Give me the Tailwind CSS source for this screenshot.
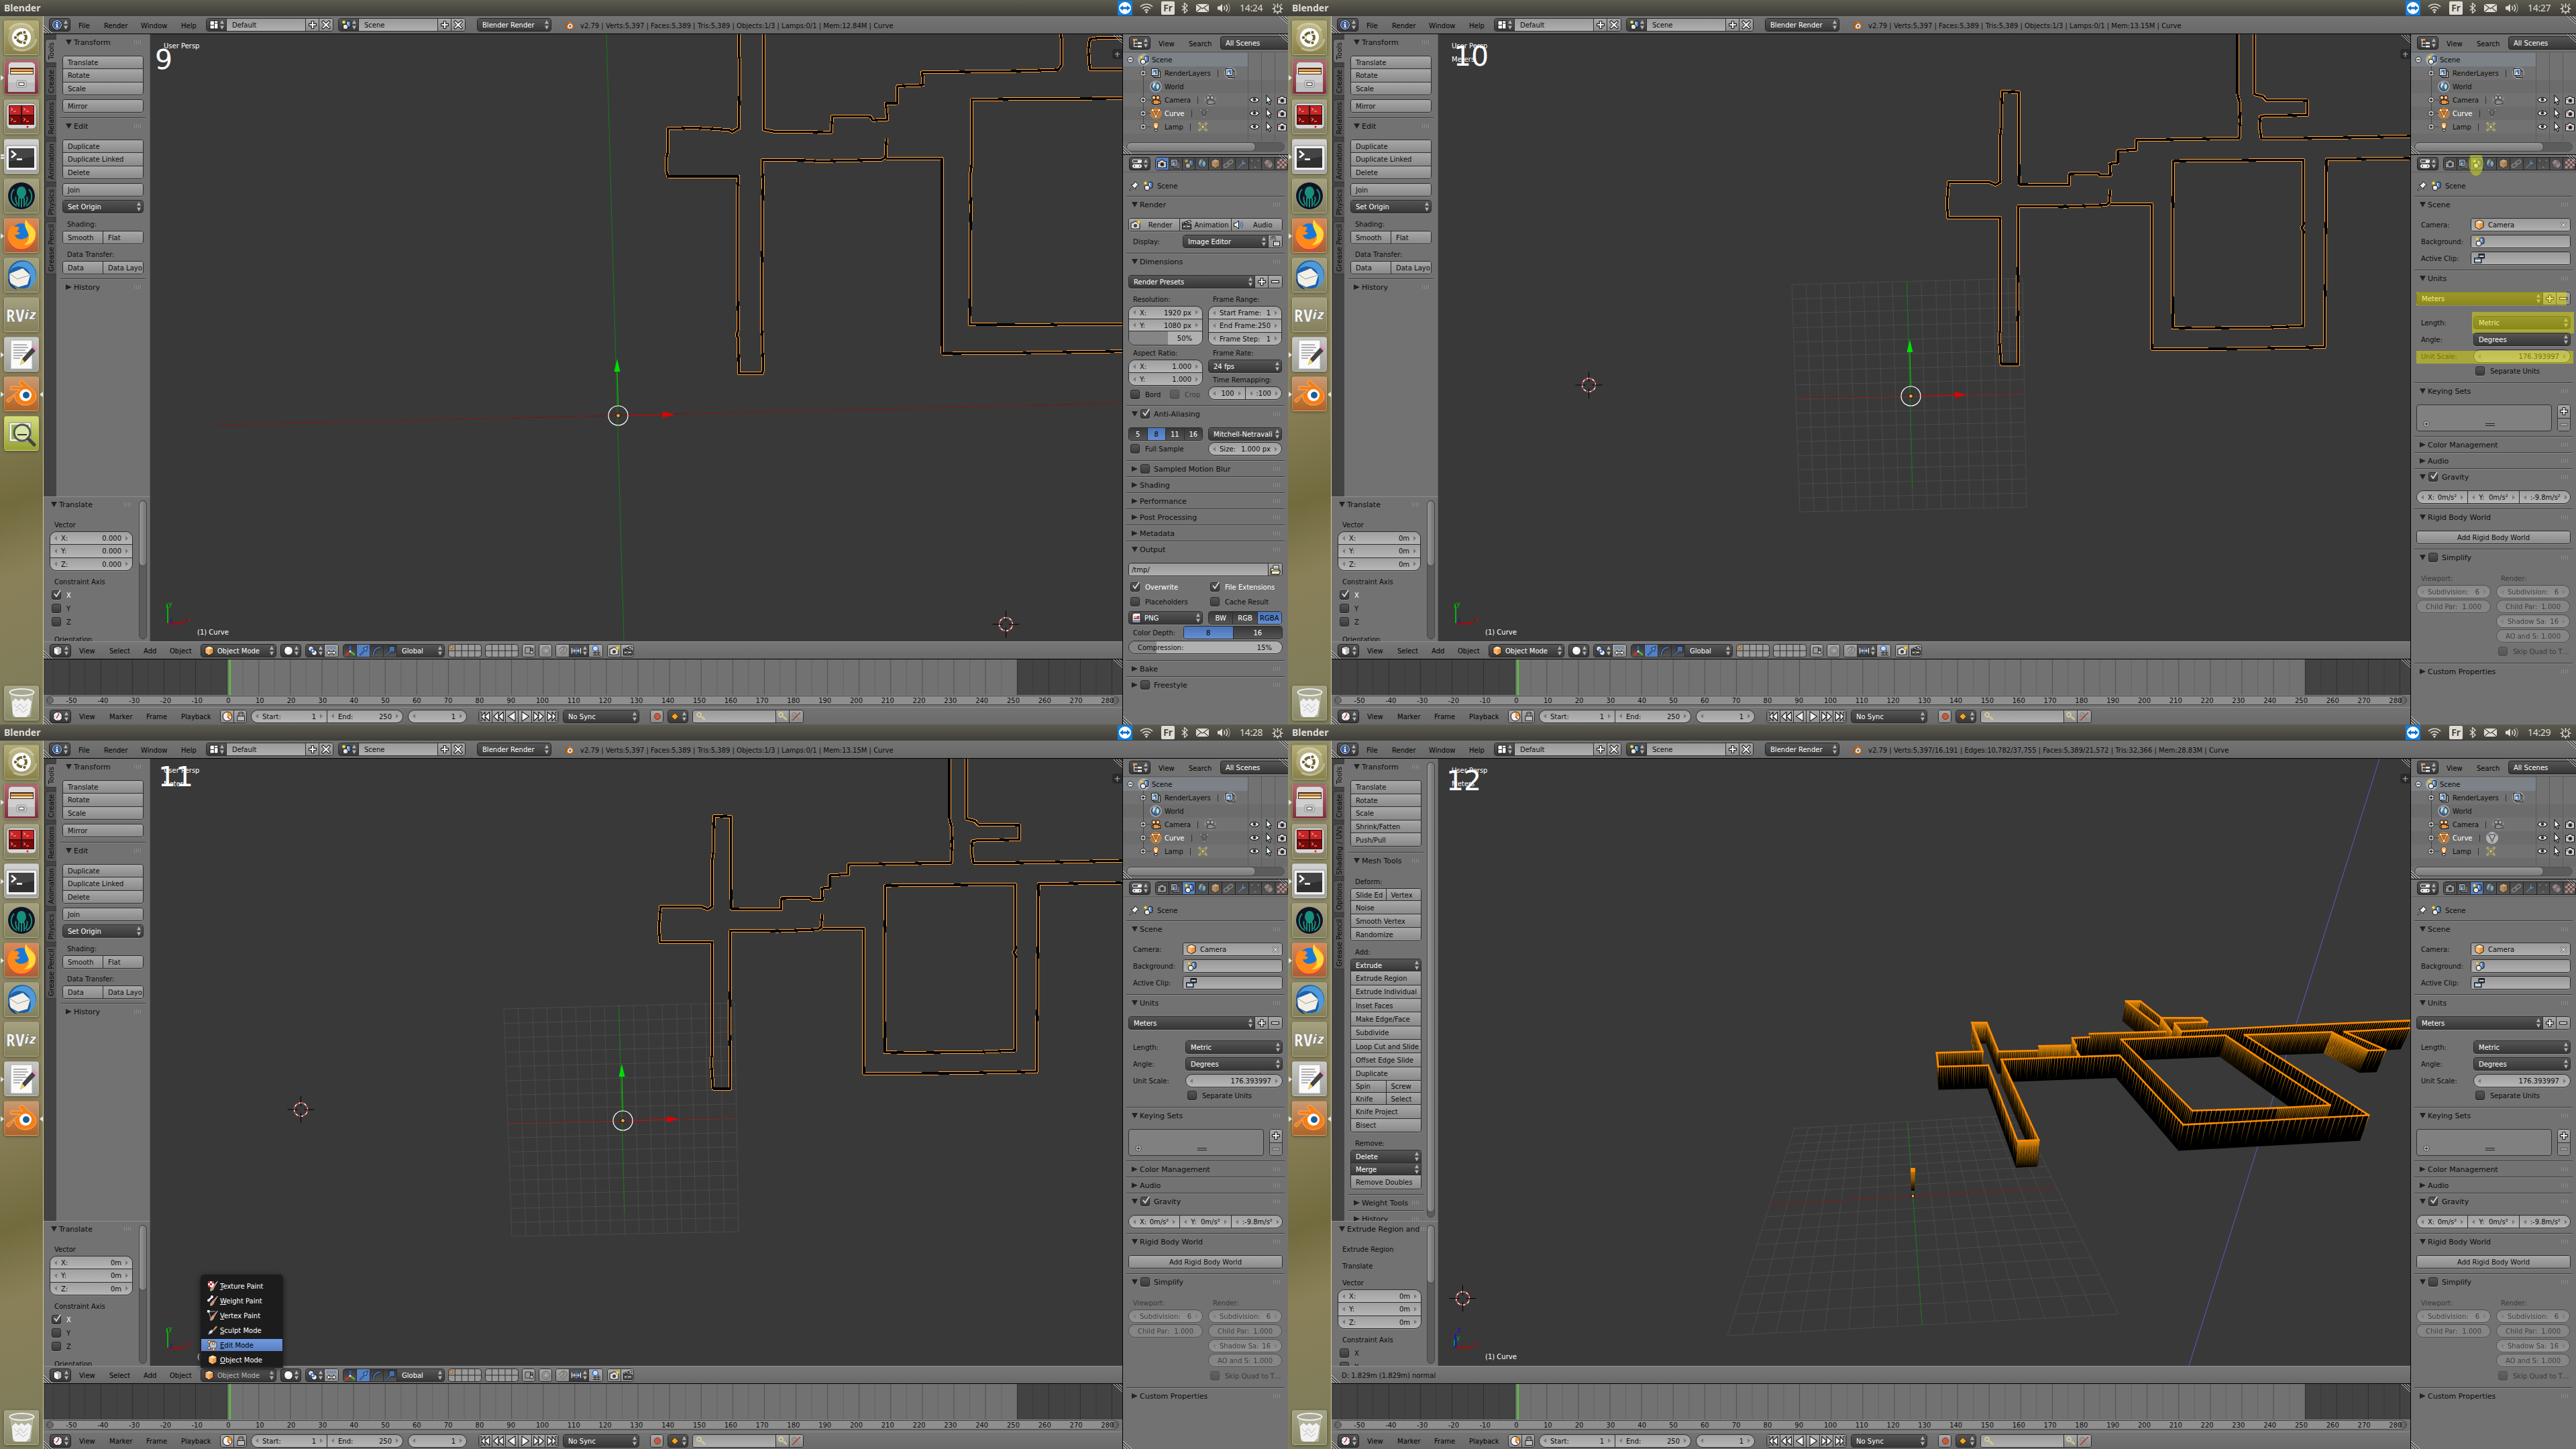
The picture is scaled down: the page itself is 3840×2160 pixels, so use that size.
<!DOCTYPE html>
<html lang="en">
<head>
<meta charset="utf-8">
<title>Blender</title>
<script src="https://cdn.jsdelivr.net/npm/@tailwindcss/browser@4"></script>
</head>
<body class="bg-[#393939]">
<main id="app" class="grid grid-cols-[1920px_1920px] w-[3840px] h-[2160px] overflow-hidden font-['DejaVu_Sans',sans-serif] text-[10px] leading-none text-[#0a0a0a]"></main>
<script>
/* ---------- small icons, drawn on a 16x16 grid ---------- */
const svg = (body, s = 16) => `<svg width="${s}" height="${s}" viewBox="0 0 16 16" class="shrink-0">${body}</svg>`;
const K = 'stroke="#111" stroke-width="1"';
const I = {
  info: svg(`<circle cx="8" cy="8" r="6.600" fill="#3c5f9c" stroke="#e8e8e8"/><circle cx="8" cy="8" r="7.400" fill="none" stroke="#111" stroke-width=".7"/><path d="M7 4h2v2H7zM6.400 7H9v4h1v1H6.400v-1H7.200V8h-.8z" fill="#fff"/>`),
  layout: svg(`<path d="M2 2h12v12H2z" fill="#fff" ${K}/><path d="M8.500 2v12M2 8.500h6M8 5.500h6" stroke="#333" stroke-width="1.200"/>`),
  scene: svg(`<circle cx="4.500" cy="4" r="2" fill="#fff6a0" stroke="#b5a62c" stroke-width="1.300"/><path d="M9 3.500c1-1.600 5-1.600 6 0v7c-1 1.400-5 1.400-6 0z" fill="#4f7fc4" ${K}/><path d="M9.500 3.500h2v7h-2z" fill="#cfe0f7"/><circle cx="7" cy="11" r="3.900" fill="#ddd" ${K}/><circle cx="6" cy="10" r="1.600" fill="#fff"/>`),
  tree: svg(`<path d="M2 2h6v2.500H2z" fill="#f0a04a"/><path d="M3.500 4v9.500h5M3.500 8.500h5" stroke="#eee" fill="none"/><path d="M9 7h6v2.500H9zM9 12h6v2.500H9z" fill="#eee"/>`),
  props: svg(`<rect x="1.500" y="2" width="13" height="4.600" rx="1" fill="#555" stroke="#eee"/><path d="M9 3h5v3H9z" fill="#eee"/><rect x="1.500" y="9.400" width="13" height="4.600" rx="2.200" fill="#eee" stroke="#eee"/><path d="M3 11.700l2-1.400v2.800zM13 11.700l-2-1.400v2.800z" fill="#333"/>`),
  cube: svg(`<path d="M8 1l6 2.500v8L8 15l-6-3.500v-8z" fill="#e89a45" ${K}/><path d="M2.500 4L8 6.300 13.500 4 8 1.600z" fill="#ffe2bb"/><path d="M8 6.300V14.400L2.500 11.200V4z" fill="#f7b873"/>`),
  cubeW: svg(`<path d="M8 1l6 2.500v7c0 2-4 3.500-6 4.500-2-1-6-2.500-6-4.500v-7z" fill="#bbb" ${K}/><path d="M3 4l5 2v8c-2-1-5-2-5-4z" fill="#fff"/>`),
  sphere: svg(`<circle cx="8" cy="8" r="6.500" fill="#eee" ${K}/><circle cx="6.500" cy="6" r="3.500" fill="#fff"/>`),
  pivot: svg(`<circle cx="5.500" cy="5" r="4" fill="#ddd" ${K}/><circle cx="10.500" cy="11" r="4" fill="#eee" ${K}/><rect x="6" y="6" width="4" height="4" fill="#fff" stroke="#2f67c9" stroke-width="1.600"/>`),
  manip: svg(`<circle cx="3" cy="3" r="1.500" fill="#a8c8f5" stroke="#28508f" stroke-width=".8"/><circle cx="8" cy="3" r="1.500" fill="#a8c8f5" stroke="#28508f" stroke-width=".8"/><circle cx="13" cy="3" r="1.500" fill="#a8c8f5" stroke="#28508f" stroke-width=".8"/><path d="M1 11l4-3.500v2.300h6V7.500l4 3.500-4 3.500v-2.300H5v2.300z" fill="#fff" ${K}/>`),
  axes: svg(`<path d="M8 9V2" stroke="#2860d0" stroke-width="2.600" stroke-linecap="round"/><path d="M8 9l-6 5" stroke="#e03020" stroke-width="2.600" stroke-linecap="round"/><path d="M8 9l6 4.500" stroke="#58b82c" stroke-width="2.600" stroke-linecap="round"/><circle cx="8" cy="9" r="1.300" fill="#fff"/>`),
  move: svg(`<path d="M2 14L9.500 6.500 7 4.500 14.500 1.500 12 9l-1.500-1.500L3.500 15z" fill="#5f95e0" stroke="#10264e" stroke-width=".9"/>`),
  rot: svg(`<path d="M3 14C3 7 7 3.500 13 3" stroke="#1c2a40" stroke-width="4" fill="none"/><path d="M3 14C3 7 7 3.500 13 3" stroke="#4c6f9f" stroke-width="2.200" fill="none"/>`),
  scale: svg(`<path d="M2.500 14L8 8.500M7 2.500h6.500V9H7z" stroke="#1c2a40" stroke-width="3.500" fill="#4c6f9f"/><path d="M2.500 14L8 8.500M7.500 3h5.500v5.500H7.500z" stroke="#4c6f9f" stroke-width="1.800" fill="#4c6f9f"/>`),
  lockv: svg(`<path d="M2 3h8v9H2z" fill="#999" stroke="#333"/><circle cx="11.500" cy="6" r="2" fill="none" stroke="#222" stroke-width="1.200"/><rect x="9" y="8" width="5" height="5" rx="2" fill="#bbb" stroke="#222"/>`),
  ring: svg(`<circle cx="8" cy="8" r="6" fill="none" stroke="#777" stroke-width="1.400"/><circle cx="8" cy="8" r="3.300" fill="#aaa" stroke="#777"/>`),
  magnet: svg(`<path d="M4 12L9 7c2.500-2.500-1-6-3.500-3.500L2 7M7 14.500l5.500-5C17 5 11 0 6.500 3" fill="none" stroke="#777" stroke-width="1.600"/>`),
  snapinc: svg(`<path d="M1.500 4v8M14.500 4v8M5 5.500v5M11 5.500v5" stroke="#eee" stroke-width="1.200"/><path d="M8 3v10" stroke="#3b76d8" stroke-width="2.400"/><path d="M1.500 8h13" stroke="#eee" stroke-width=".8"/>`),
  snapgrid: svg(`<path d="M7 8v7M12 7v8M4 11h11M4 14.500h11" stroke="#222"/><circle cx="7.500" cy="4.500" r="4" fill="#c7dcfa" stroke="#2b5fb0" stroke-width="1.300"/>`),
  cam: svg(`<path d="M1.500 4.500H5l1-2h4l1 2h3.500V14H1.500z" fill="#ccc" ${K}/><circle cx="8.500" cy="9" r="3.800" fill="#444" stroke="#eee" stroke-width="1.200"/><circle cx="8.500" cy="9" r="1.500" fill="#111"/><path d="M2.500 6.500h2v1.500h-2z" fill="#c22"/>`),
  camstar: svg(`<path d="M1 5H4.500l1-2h4l1 2H14V14H1z" fill="#ccc" ${K}/><circle cx="7.500" cy="9.500" r="3.400" fill="#444" stroke="#eee" stroke-width="1.200"/><path d="M12.500 0l1 2.500L16 3l-2 1.500.3 2.500-1.800-1.200L10.800 7l.2-2.500L9 3l2.500-.5z" fill="#ffd84a" stroke="#9a7a10" stroke-width=".5"/>`),
  clap: svg(`<path d="M1.500 7h13v7.500h-13z" fill="#555" stroke="#111"/><path d="M1 5.500L13.500 1l1 2.400L2 7z" fill="#eee" ${K}/><path d="M4 4.500l2 1.800M8 3l2 1.600" stroke="#111" stroke-width="1.400"/><path d="M3 10.500h3M8 10.500h5" stroke="#eee"/>`),
  spk: svg(`<path d="M1.500 5.500h3L8.500 2v12l-4-3.500h-3z" fill="#e8e8e8" ${K}/><path d="M10.500 5c1.500 2 1.500 4 0 6M12.700 3c2.500 3 2.500 7 0 10" fill="none" stroke="#3c6fc0" stroke-width="1.300"/>`),
  unlock: svg(`<path d="M2 6V4c0-3.500 5.500-3.500 5.500 0v4" fill="none" stroke="#111" stroke-width="2.600"/><path d="M2 6V4c0-3.500 5.500-3.500 5.500 0v4" fill="none" stroke="#eee" stroke-width="1"/><rect x="5.500" y="8" width="9" height="6.500" fill="#eee" ${K}/><path d="M7 10h6M7 12h6" stroke="#999"/>`),
  lock: svg(`<path d="M5 8V5c0-4 6.500-4 6.500 0v3" fill="none" stroke="#222" stroke-width="2.600"/><path d="M5 8V5c0-4 6.500-4 6.500 0v3" fill="none" stroke="#bbb" stroke-width="1"/><rect x="3" y="7.500" width="10.500" height="7" fill="#bbb" stroke="#222"/>`),
  clock: svg(`<circle cx="8" cy="8" r="6.800" fill="#eee" ${K}/><path d="M8 8L10 3.500M8 8L5.500 10.500" stroke="#c01818" stroke-width="1.400"/><path d="M8 2v1.500M8 12.500V14M2 8h1.500M12.500 8H14" stroke="#555"/>`),
  clockO: svg(`<circle cx="8" cy="8" r="6.800" fill="#eee" ${K}/><path d="M8 8V1.800A6.200 6.200 0 0 1 14.200 8z" fill="#f59a1c"/><path d="M8 8l3.500 4" stroke="#c01818" stroke-width="1.400"/>`),
  layers: svg(`<path d="M5 5h9.500v9.500H5z" fill="#eee" ${K}/><path d="M3.500 3.500h9V13h-9z" fill="#eee" ${K}/><path d="M1.500 1.500h9.500v10H1.500z" fill="#fff" ${K}/><path d="M3 3h6.500v7H3z" fill="#3f70b5"/><circle cx="5.500" cy="8" r="1.600" fill="#fff"/><circle cx="4.500" cy="4.500" r="1" fill="#ffe36b"/>`),
  world: svg(`<circle cx="8" cy="8" r="6.300" fill="#3a6fae" stroke="#1a2a44"/><path d="M3.500 5C5 2.500 8 3 7.500 5S5 7 5.500 9 4 9.500 3 8.500zM10 3.500l3 2.500-.5 4-2 2.500-1.500-3L8.500 8z" fill="#cde0b8"/><path d="M4 3.500A6 6 0 0 1 9 2.200" stroke="#fff" fill="none"/>`),
  film: svg(`<circle cx="5" cy="4.500" r="3" fill="#f0a35a" ${K}/><circle cx="11" cy="4.500" r="3" fill="#f0a35a" ${K}/><circle cx="5" cy="4.500" r="1" fill="#fff"/><circle cx="11" cy="4.500" r="1" fill="#fff"/><path d="M4 8h8v2l3-1v5l-3-1v1.500H4z" fill="#ee9440" ${K}/><path d="M2 9l2 2v2H2z" fill="#eee" ${K}/>`),
  tri: svg(`<path d="M3 3h10L8 13z" fill="none" stroke="#8c4a08" stroke-width="3.400"/><path d="M3 3h10L8 13z" fill="none" stroke="#ffb865" stroke-width="1.500"/><circle cx="3" cy="3" r="1.300" fill="#fff"/><circle cx="13" cy="3" r="1.300" fill="#fff"/><circle cx="8" cy="13" r="1.300" fill="#fff"/>`),
  triG: svg(`<path d="M3 3h10L8 13z" fill="none" stroke="#444" stroke-width="1.200"/><path d="M2 2h2.500v2.500H2zM11.500 2H14v2.500h-2.500zM6.800 12h2.500v2.500H6.800z" fill="#bbb" stroke="#444" stroke-width=".6"/>`),
  bulb: svg(`<path d="M4 5.500C4 0 12 0 12 5.500 12 8 10 8.500 10 11H6C6 8.500 4 8 4 5.500z" fill="#f5b36a" stroke="#7a400a"/><path d="M6 11.500h4v2L8 15l-2-1.500z" fill="#ddd" ${K}/><path d="M7 5l1 5 1-5" stroke="#fff" fill="none"/>`),
  lampd: svg(`<rect x="3" y="3" width="10" height="10" fill="#8f8b62"/><circle cx="8" cy="8" r="2.400" fill="#d8d28a" stroke="#555"/><path d="M2 5V2h3M11 2h3v3M14 11v3h-3M5 14H2v-3M2 2l3.500 3.500M14 2l-3.500 3.500M2 14l3.500-3.500M14 14l-3.500-3.500" stroke="#bdb878" fill="none"/>`),
  eye: svg(`<path d="M1 8C4 3 12 3 15 8 12 12.500 4 12.500 1 8z" fill="#fff" stroke="#111" stroke-width="1.200"/><circle cx="8" cy="7.500" r="2.800" fill="#555"/><circle cx="8" cy="7.500" r="1.300" fill="#111"/>`),
  cursor: svg(`<path d="M5 1l7.500 8.500-3.500.3 2 4.200-1.800 1-2-4.300L5 13z" fill="#fff" stroke="#111" stroke-width="1.100"/>`),
  chain: svg(`<rect x="1" y="8" width="8" height="4.500" rx="2.200" transform="rotate(-35 5 10)" fill="none" stroke="#aaa" stroke-width="1.500"/><rect x="7" y="3.500" width="8" height="4.500" rx="2.200" transform="rotate(-35 11 6)" fill="none" stroke="#aaa" stroke-width="1.500"/>`),
  wrench: svg(`<path d="M2 13.500L8 7.500C7 4 10 1 13 2l-2.500 2.500 1 1.500L14.500 5C15 8 12 10 9.500 9.200l-6 6z" fill="#8aa8cc" stroke="#22324a"/>`),
  mat: svg(`<circle cx="8" cy="8" r="6.300" fill="#8b8080" stroke="#222"/><path d="M8 8V1.700A6.300 6.300 0 0 0 1.700 8zM8 8v6.300A6.300 6.300 0 0 0 14.300 8z" fill="#c9a9a9"/>`),
  tex: svg(`<path d="M1 1h14v14H1z" fill="#ccc"/><path d="M1 1h3.500v3.500H1zM8 1h3.500v3.500H8zM4.500 4.500H8V8H4.500zM11.500 4.500H15V8h-3.500zM1 8h3.500v3.500H1zM8 8h3.500v3.500H8zM4.500 11.500H8V15H4.500zM11.500 11.500H15V15h-3.500z" fill="#8f3a34"/>`),
  pin: svg(`<path d="M9 1.500l5.500 5.500-2 .5L10 10l-.5 3L3 6.500 6 6l2.500-2.500z" fill="#eee" ${K}/><path d="M5.500 10.500L1 15" stroke="#111" stroke-width="2.200"/><path d="M5.500 10.500L1.500 14.500" stroke="#eee" stroke-width="1"/>`),
  clip: svg(`<path d="M7 1.500h8.500V8H7z" fill="#333" stroke="#111"/><path d="M8 4h6.500v2H8z" fill="#bcd3ee"/><path d="M.5 7.500H11V15H.5z" fill="#2c4468" stroke="#111"/><path d="M1.500 10H10v2.800H1.500z" fill="#dfeaf7"/><path d="M1.500 8.700H10M1.500 14H10" stroke="#fff" stroke-dasharray="1.200 1"/>`),
  png: svg(`<path d="M4.500 1H14v14H2V3.500z" fill="#fff" ${K}/><path d="M4 5h8.500v5H4z" fill="#a8505a"/><path d="M4 5h5v3H4z" fill="#e8b0a0"/><path d="M3 11h10v3H3z" fill="#8f8fc4"/>`),
  folder: svg(`<path d="M5 1.500h8V10H5z" fill="#fff" ${K}/><path d="M6.500 4h5M6.500 6h5" stroke="#666"/><path d="M1.500 6h3l1 1.500H14V15H1.500z" fill="#e8dfa8" ${K}/><path d="M3 10h12.500L14 15H1.500z" fill="#f7f1c8" ${K}/>`),
  plus: svg(`<path d="M6.300 2.500h3.400v3.800h3.800v3.400H9.700v3.800H6.300V9.700H2.500V6.300h3.800z" fill="#f2f2f2" stroke="#222" stroke-width="1.200"/>`),
  minus: svg(`<path d="M2.500 6.300h11v3.400h-11z" fill="#f2f2f2" stroke="#222" stroke-width="1.200"/>`),
  x: svg(`<path d="M3.500 1.500L8 5.500l4.500-4 2 2-4 4.500 4 4.500-2 2-4.500-4-4.500 4-2-2 4-4.500-4-4.500z" fill="#eee" stroke="#222" stroke-width="1.100"/>`),
  logo: svg(`<path d="M1 12.500L7.500 7H2.500V5.500H9L7 3.500 8.200 2.200l5.500 4.600c2.800 2.800 1.300 8-4.200 8-3.800 0-5.300-2.800-4.900-4.800L2 13.500z" fill="#f09030" stroke="#7a3a05" stroke-width=".6"/><circle cx="9.600" cy="10" r="3" fill="#fff"/><circle cx="9.800" cy="10" r="1.700" fill="#27619e"/>`),
  brush: (l) => svg(`${l}<path d="M15.500 1L8 8.500l1.800 1.800z" fill="#f0502c" stroke="#fff" stroke-width=".6"/><path d="M8 8.500L4.500 12.500 5 15.500C8 15 9.500 13 9.800 10.300z" fill="#c9906c" stroke="#fff" stroke-width=".5"/>`),
  chisel: svg(`<path d="M1.500 14.500L3 9.500l4-2.500 2 2-2.500 3.500z" fill="#cfe0f2" stroke="#555" stroke-width=".6"/><path d="M8 8l5-6.500 2 1.500-5.500 6z" fill="#e0a878" stroke="#7a4a22" stroke-width=".7"/>`),
  edit: svg(`<path d="M3.500 4L8 2l6 2v7l-4 3-6.500-2z" fill="#b9c4d6" stroke="#444"/><path d="M1 1.500h3.500V5H1zM7.500 3.500H11V7H7.500zM1 10.500h3.500V14H1zM7.500 12.500H11V16H7.500z" fill="#ffe0bb" stroke="#8a4a0c"/>`),
  rec: svg(`<circle cx="8" cy="8" r="4.500" fill="#c75a3c" stroke="#8c2a18"/>`),
  keyset: svg(`<path d="M8 3l5 5-5 5-5-5z" fill="#f5a623" stroke="#6b3b00"/>`),
  key: svg(`<circle cx="5" cy="5.500" r="3" fill="none" stroke="#d8cf92" stroke-width="1.800"/><path d="M7 7.500l6.500 6M10 10.500l2-2M12 12.500l2-1.500" stroke="#d8cf92" stroke-width="1.600"/>`),
  keyx: svg(`<circle cx="5" cy="5.500" r="3" fill="none" stroke="#8d8a78" stroke-width="1.800"/><path d="M7 7.500l6.500 6" stroke="#8d8a78" stroke-width="1.600"/><path d="M2 14L14 2" stroke="#a33" stroke-width="1.400"/>`)
};
const play = (p) => svg(`<path d="${p}" fill="#f2f2f2" stroke="#222" stroke-width="1.100" stroke-linejoin="round"/>`, 18);
const PL = [
  play('M1.500 2h2v5.500L8 2v5.500L14 2v12L8 8.500V14L3.500 8.500V14h-2z'),
  play('M1.500 8L8 2v12zM8 8l6.500-6v12z'),
  play('M3 8l9.500-6.500v13z'),
  play('M13 8L3.500 1.500v13z'),
  play('M14.500 8L8 2v12zM8 8L1.500 2v12z'),
  play('M14.500 2h-2v5.500L8 2v5.500L2 2v12l6-5.500V14l4.500-5.500V14h2z')
];

/* ---------- widgets ---------- */
const ud = `<svg width="6" height="14" viewBox="0 0 6 14" class="shrink-0"><path d="M3 0l3 5.500H0zM3 14l3-5.500H0z" fill="#b4b4b4"/></svg>`;
const arL = (o) => `<svg width="4" height="7" viewBox="0 0 4 7" class="shrink-0"><path d="M4 0v7L0 3.500z" fill="#666" opacity="${o}"/></svg>`;
const arR = (o) => `<svg width="4" height="7" viewBox="0 0 4 7" class="shrink-0"><path d="M0 0v7l4-3.500z" fill="#666" opacity="${o}"/></svg>`;
const btn = (t) => `<div class="flex-1 basis-0 min-w-0 flex items-center pt-[2px] pl-[7px] overflow-hidden whitespace-nowrap bg-linear-to-b from-[#a8a8a8] to-[#8a8a8a]">${t}</div>`;
const btnC = (t) => `<div class="flex-1 min-w-0 flex items-center justify-center overflow-hidden whitespace-nowrap bg-linear-to-b from-[#a8a8a8] to-[#8a8a8a]">${t}</div>`;
const btnI = (icon, t) => `<div class="flex-1 basis-0 min-w-0 flex items-center pl-[2px] overflow-hidden whitespace-nowrap bg-linear-to-b from-[#a8a8a8] to-[#8a8a8a]">${icon}<span class="flex-1 text-center pt-[2px]">${t}</span></div>`;
const sq = (icon) => `<div class="w-[20px] shrink-0 flex items-center justify-center bg-linear-to-b from-[#a8a8a8] to-[#8a8a8a]">${icon}</div>`;
const menu = (t, pad = 'pl-[7px]', icon = '') => `<div class="flex-1 min-w-0 flex items-center justify-between ${pad} pr-[3px] text-white whitespace-nowrap bg-linear-to-b from-[#555] to-[#373737]"><div class="flex items-center gap-1">${icon}<span class="pt-[2px]">${t}</span></div>${ud}</div>`;
const radio = (t, on) => `<div class="flex-1 flex items-center justify-center pt-[2px] ${on ? 'bg-linear-to-b from-[#4a74b6] to-[#658fd1] text-black' : 'bg-linear-to-b from-[#373737] to-[#555] text-white'}">${t}</div>`;
const num = (l, v, o = 1) => `<div class="flex-1 min-w-0 flex items-center gap-1.5 px-[6px] whitespace-nowrap bg-linear-to-b from-[#a0a0a0] to-[#b6b6b6]">${arL(.75 * o)}<span class="flex-1 flex justify-between pt-[2px]"><span>${l}</span><span>${v}</span></span>${arR(.75 * o)}</div>`;
const col = (n, rows) => `<div class="flex flex-col shrink-0 divide-y divide-[#2c2c2c] rounded-[4px] border border-[#2c2c2c] overflow-hidden shadow-[0_1px_0_#8b8b8b]" style="height:${n * 20 - (n > 1 ? 1 : 0)}px">${rows.join('')}</div>`;
const pill = (n, rows, dim) => `<div class="flex flex-col shrink-0 divide-y divide-[#2c2c2c] rounded-[10px] border border-[#2c2c2c] overflow-hidden shadow-[0_1px_0_#8b8b8b] ${dim ? 'opacity-50' : ''}" style="height:${n * 20 - (n > 1 ? 1 : 0)}px">${rows.join('')}</div>`;
const split = (a) => `<div class="flex flex-1 divide-x divide-[#2c2c2c]">${a.join('')}</div>`;
const check = (on, dim) => `<span class="relative size-[14px] shrink-0 rounded-[3px] border border-[#2a2a2a] bg-linear-to-b from-[#555] to-[#3a3a3a] shadow-[0_1px_0_#8b8b8b] ${dim ? 'opacity-50' : ''}">${on ? '<svg width="13" height="13" viewBox="0 0 13 13" class="absolute left-0 -top-0.5"><path d="M3 6l3 4 6-9" fill="none" stroke="#ddd" stroke-width="1.800"/></svg>' : ''}</span>`;
const opt = (t, on, dim) => `<label class="flex items-center gap-2 h-[20px] pl-[3px] whitespace-nowrap ${on ? 'text-white' : ''} ${dim ? 'text-[#3c3c3c]' : ''}">${check(on, dim)}<span class="pt-[2px]">${t}</span></label>`;
const lab = (t, dim) => `<div class="h-[20px] flex items-center pt-[2px] pl-[7px] whitespace-nowrap ${dim ? 'text-[#3c3c3c]' : ''}">${t}</div>`;
const sp = (h) => `<div class="shrink-0" style="height:${h}px"></div>`;
const grip = `<svg width="11" height="6" viewBox="0 0 11 6" class="shrink-0"><path d="M0 1h11M0 3h11M0 5h11" stroke="#a5a5a5" stroke-dasharray="1 2"/></svg>`;
const triD = `<svg width="9" height="8" viewBox="0 0 9 8" class="shrink-0"><path d="M0 0h9L4.500 8z" fill="#222"/></svg>`;
const triR = `<svg width="9" height="8" viewBox="0 0 9 8" class="shrink-0"><path d="M0 0v8l9-4z" fill="#222"/></svg>`;
const title = (t, open, chk) => `<div class="h-[22px] shrink-0 flex items-center text-[11px] whitespace-nowrap pl-[8px] pr-[6px]">${open ? triD : triR}${chk === undefined ? '' : `<span class="ml-[4px] flex">${check(chk)}</span>`}<span class="${chk === undefined ? 'ml-[3px]' : 'ml-[6px]'} flex-1">${t}</span>${grip}</div>`;
const sep = `<div class="h-[2px] shrink-0 border-t border-[#3b3b3b] bg-[#8a8a8a]"></div>`;
const panel = (t, open, body, chk) => `${sep}${title(t, open, chk)}${open ? `<div class="pt-[9px] px-[3px] flex flex-col">${body}</div>` : ''}`;
const menus = (list) => list.map(([t, w]) => `<span class="shrink-0 pt-[3px] text-black" style="width:${w}px">${t}</span>`).join('');
const edSel = (icon) => `<div class="w-[32px] h-[20px] shrink-0 flex items-center justify-between pl-[3px] pr-[3px] rounded-[4px] border border-[#222] bg-linear-to-b from-[#555] to-[#373737]">${icon}${ud}</div>`;
const hatch = (cls) => `<svg width="13" height="12" viewBox="0 0 13 12" class="absolute ${cls}"><path d="M0 0l13 12M4 0l9 8.500M8 0l5 4.500" stroke="#ddd" stroke-width=".9"/><path d="M1.500 0l13 12M5.500 0l9 8.500" stroke="#111" stroke-width=".7"/></svg>`;
const hatchB = (cls) => `<svg width="13" height="12" viewBox="0 0 13 12" class="absolute ${cls}"><path d="M0 0l13 12M0 4l9 8.500M0 8l5 4.500" stroke="#ddd" stroke-width=".9"/><path d="M0 2l13 12M0 6l9 8.500" stroke="#111" stroke-width=".7"/></svg>`;

/* ---------- desktop chrome ---------- */
const topbar = (time) => `
<header class="h-[24px] shrink-0 flex items-center justify-between pl-[6px] pr-[7px] bg-linear-to-b from-[#5e5b4f] to-[#3e3d39] text-[#dfdbd2] font-['Noto_Sans',sans-serif]">
  <span class="text-[14px] font-bold">Blender</span>
  <div class="flex items-center">
    <svg width="22" height="22" viewBox="0 0 22 22" class="mr-[11px]"><path d="M0 0h22v22H0z" fill="#0f7fe0"/><circle cx="11" cy="11" r="9" fill="#fff"/><path d="M3 11l5-4v2.500h6V7l5 4-5 4v-2.500H8V15z" fill="#0f6fd0"/></svg>
    <svg width="20" height="16" viewBox="0 0 20 16" class="mr-[12px]"><path d="M1 6c5-5 13-5 18 0M4 9c3.500-3.500 8.500-3.500 12 0M7 12c2-2 4-2 6 0" fill="none" stroke="#dfdbd2" stroke-width="1.700"/><circle cx="10" cy="14" r="1.600" fill="#dfdbd2"/></svg>
    <span class="w-[20px] h-[20px] mr-[10px] rounded-[2px] bg-[#dfdbd2] text-[#3a3934] text-[14px] font-semibold flex items-center justify-center">Fr</span>
    <svg width="10" height="16" viewBox="0 0 10 16" class="mr-[12px]"><path d="M1 4.500l8 7-4.500 4V.5l4.500 4-8 7" fill="none" stroke="#dfdbd2" stroke-width="1.300"/></svg>
    <svg width="19" height="14" viewBox="0 0 19 14" class="mr-[13px]"><path d="M0 1h19v12H0z" fill="#dfdbd2"/><path d="M0 1l9.500 7L19 1M0 13l7-6M19 13l-7-6" fill="none" stroke="#4a4842" stroke-width="1.300"/></svg>
    <svg width="20" height="16" viewBox="0 0 20 16" class="mr-[13px]"><path d="M0 5.500h3L7 2v12l-4-3.500H0z" fill="#dfdbd2"/><path d="M9.500 5c1.500 2 1.500 4 0 6M12.500 3c2.500 3 2.500 7 0 10" fill="none" stroke="#dfdbd2" stroke-width="1.500"/><path d="M15.500 1c3.500 4 3.500 10 0 14" fill="none" stroke="#8f8c82" stroke-width="1.500"/></svg>
    <span class="w-[36px] mr-[12px] text-[14px] tracking-[-0.3px] whitespace-nowrap">${time}</span>
    <svg width="17" height="17" viewBox="0 0 17 17"><circle cx="8.500" cy="9" r="4.800" fill="none" stroke="#dfdbd2" stroke-width="1.700"/><path d="M8.500 0v8" stroke="#45443e" stroke-width="4"/><path d="M8.500 1v7M13 4l1.800-1.800M4 4L2.200 2.200M14 9h2.500M.5 9H3M12.500 13l1.800 1.800M4.500 13l-1.800 1.800M8.500 14.500V17" stroke="#dfdbd2" stroke-width="1.700"/></svg>
  </div>
</header>`;

const app = (body) => `<svg width="52" height="52" viewBox="0 0 52 52">${body}</svg>`;
const LA = {
  ubuntu: ['from-[#b5ad76] to-[#8a8148]', app(`<circle cx="26" cy="26" r="20" fill="#fff" opacity=".18"/><path d="M8 14C14 4 34 0 44 16M48 28C46 42 30 50 14 42" stroke="#fff" stroke-opacity=".35" stroke-width="3" fill="none"/><circle cx="26" cy="26" r="14" fill="#fff"/><circle cx="26" cy="26" r="7" fill="none" stroke="#6e6735" stroke-width="4"/><g fill="#6e6735" stroke="#fff" stroke-width="1.500"><circle cx="17" cy="26" r="3"/><circle cx="30.500" cy="18.200" r="3"/><circle cx="30.500" cy="33.800" r="3"/></g>`)],
  files: ['from-[#b06a70] to-[#7e2f3c]', app(`<path d="M7 7l3-3h32l4 3v38H7z" fill="#d9d9d9"/><path d="M9 12h35v12H9z" fill="#3a2a20"/><path d="M10 14h33v3H10z" fill="#f3a04c"/><path d="M10 18h33v3H10z" fill="#ffe0b0"/><path d="M6 22h40v26H6z" fill="#bdbdbd"/><path d="M6 22h40v12H6z" fill="#cfcfcf"/><rect x="19" y="31" width="14" height="10" rx="2" fill="#ddd" stroke="#888"/><rect x="22" y="34" width="8" height="4.500" fill="#eee" stroke="#333"/>`)],
  terminator: ['from-[#aaa588] to-[#85805e]', app(`<rect x="4" y="6" width="44" height="38" rx="6" fill="#d6d6d6" stroke="#777"/><path d="M7 9h38v29H7z" fill="#311"/><path d="M8 10h17v13H8zM27 10h17v13H27z" fill="#c82424"/><path d="M8 25h17v12H8zM27 25h17v12H27z" fill="#7d0808"/><path d="M10 13l3 2-3 2M14 18h4M29 13l3 2-3 2M33 18h4M10 28l3 2-3 2M14 33h4M29 28l3 2-3 2M33 33h4" stroke="#f6c0c0" fill="none"/><circle cx="35" cy="41" r="1.500" fill="#f00"/>`)],
  terminal: ['from-[#d2d2d2] to-[#a5a5a5]', app(`<rect x="3" y="10" width="46" height="37" rx="2" fill="#f0f0f0" stroke="#888"/><path d="M7 14h38v29H7z" fill="#2f2f2f"/><path d="M7 14h38v12L7 34z" fill="#444"/><path d="M11 18l6 5-6 5M19 30.500h8" stroke="#fff" stroke-width="2.600" fill="none"/>`)],
  kraken: ['from-[#a6a180] to-[#84805c]', app(`<circle cx="26" cy="26" r="20.500" fill="#12131f" stroke="#9a9a9a"/><path d="M26 12c6 0 7 6 7 10 0 3-3 4-3 8h-8c0-4-3-5-3-8 0-4 1-10 7-10z" fill="#178f7e"/><path d="M15 16C8 24 10 36 19 41M37 16c7 8 5 20-4 25M22 29v13M30 29v13M26 29v14M18 27c-2 4 0 8 2 12M34 27c2 4 0 8-2 12" stroke="#178f7e" stroke-width="2" fill="none"/>`)],
  firefox: ['from-[#d98a5a] to-[#a75f34]', app(`<circle cx="26" cy="28" r="20" fill="#ff7a1a"/><path d="M8 18c-6 12 0 28 16 30 10 1 20-6 22-16 0 0-8 8-18 4z" fill="#ee2a50"/><circle cx="26" cy="22" r="14" fill="#1878d8"/><path d="M8 16C12 8 14 14 18 13c4-1 6 3 3 5-3 1-2 3 3 4-2 4-6 3-8 3 2 7 10 9 18 4 8-6 4-16-2-20C40 0 50 20 46 32 40 48 22 50 13 42 4 34 4 24 8 16z" fill="#ff8a1c"/><path d="M33 2c-6 12 4 16 4 26 0 6-4 10-8 12 10 1 19-6 18-18C46 14 36 12 33 2z" fill="#ffd83c"/>`)],
  thunderbird: ['from-[#a6a180] to-[#84805c]', app(`<circle cx="27" cy="25" r="21" fill="#1f5fa8"/><path d="M9 20C14 4 36 0 45 16c6 14 0 26-10 31C44 34 40 18 28 14 20 12 13 14 9 20z" fill="#4f9ad8"/><path d="M8 24l20-8 11 10-4 14-14 4L9 38z" fill="#f1efe6"/><path d="M8 24l12 8 19-6" stroke="#999" fill="none"/><path d="M6 30c-1 10 7 17 14 18L10 38z" fill="#17407e"/>`)],
  rviz: ['from-[#a6a180] to-[#84805c]', app(`<text x="3" y="37" font-family="Open Sans" font-weight="800" font-size="27" textLength="28" lengthAdjust="spacingAndGlyphs" fill="#f4f4f4" stroke="#555" stroke-width=".6">RV</text><text x="30" y="33" font-family="Open Sans" font-weight="800" font-style="italic" font-size="20" textLength="18" lengthAdjust="spacingAndGlyphs" fill="#f4f4f4" stroke="#555" stroke-width=".6">iz</text>`)],
  gedit: ['from-[#c9c9c7] to-[#9f9f9b]', app(`<path d="M10 5h32v43H10z" fill="#fafafa" stroke="#aaa"/><path d="M14 12h20M14 16h22M14 20h18M14 24h22M14 28h14M14 32h10" stroke="#999" stroke-width="1.300"/><path d="M24 42l3-9L42 16l5 5-16 17z" fill="#444"/><path d="M42 16l3-3 5 5-3 3z" fill="#e88fc0"/><path d="M24 42l3-9 4 5z" fill="#f0d860"/>`)],
  blender: ['from-[#c99a72] to-[#b06224]', app(`<path d="M4 35L24 20H10V15h18l-6-6c2-3 4-3 6-2l15 13c9 9 5 22-11 23-11 0-17-8-16-15L8 38c-3 2-5-1-4-3z" fill="#f57f17" stroke="#fbb36a"/><circle cx="32" cy="28" r="9" fill="#fff"/><circle cx="33" cy="28" r="5" fill="#1c5d94"/>`)],
  viewer: ['from-[#d3dc7a] to-[#97a233]', app(`<path d="M8 10h32v28H8z" fill="#f4f4f4" stroke="#888"/><path d="M11 13h26v22H11z" fill="#9bb84c"/><circle cx="27" cy="25" r="12" fill="#e8f0c0" fill-opacity=".8" stroke="#555" stroke-width="3"/><path d="M36 34l9 9" stroke="#444" stroke-width="5" stroke-linecap="round"/><path d="M20 28h14" stroke="#333" stroke-width="2"/>`)],
  trash: ['from-[#a5a485] to-[#8c8b68]', app(`<path d="M10 10h33l-4 36H14z" fill="#dcdcd0" fill-opacity=".35" stroke="#c8c8bc"/><ellipse cx="26.500" cy="10" rx="18" ry="5" fill="#a9a894" stroke="#eee" stroke-width="2"/><path d="M12 24l5-5 5 4 4-4 5 4 5-4 5 5-3 18-5 5H17l-4-5z" fill="#f1f1f1"/><path d="M15 28l5 5 4-6 5 7 6-7M17 38l6-4 5 6 7-5" stroke="#bbb" fill="none"/>`)]
};
const mark = (n) => n ? `<span class="absolute -left-[6px] top-[22px] flex flex-col gap-px">${n === 2 ? '<span class="w-[5px] h-[3px] bg-[#ddd]"></span><span class="w-[5px] h-[3px] bg-[#ddd]"></span>' : '<svg width="5" height="8"><path d="M0 0l5 4-5 4z" fill="#e4e4e4"/></svg>'}</span>` : '';
const tile = (k, m, r) => `<div class="relative size-[52px] shrink-0 rounded-[4px] border border-[#c8c4a8]/40 bg-linear-to-b ${LA[k][0]} shadow-[0_1px_4px_rgba(0,0,0,.4)]"><div class="-m-px">${LA[k][1]}</div>${mark(m)}${r ? '<svg width="5" height="8" class="absolute -right-[7px] top-[22px]"><path d="M5 0L0 4l5 4z" fill="#e4e4e4"/></svg>' : ''}</div>`;
const launcher = (s) => `
<aside class="w-[65px] shrink-0 flex flex-col gap-[7px] pl-[6px] pt-[6px] pb-[6px] border-r border-[#d4c898] bg-[linear-gradient(160deg,#8f8d6c_0%,#8d8a68_30%,#8b815a_52%,#726b3e_68%,#8a8058_78%,#7c7c5c_100%)]">
  ${tile('ubuntu')}${tile('files', 1)}${tile('terminator')}${tile('terminal', s.term)}${tile('kraken')}${tile('firefox', 1)}${tile('thunderbird')}${tile('rviz')}${tile('gedit', 1)}${tile('blender', 1, true)}${s.viewer ? tile('viewer') : ''}
  <div class="mt-auto">${tile('trash')}</div>
</aside>`;

/* ---------- info header ---------- */
const idBlock = (icon, t) => `<div class="flex w-[190px] h-[20px] shrink-0 rounded-[4px] border border-[#2c2c2c] overflow-hidden divide-x divide-[#2c2c2c]"><div class="w-[30px] flex items-center justify-between px-[3px] bg-linear-to-b from-[#555] to-[#373737]">${icon}${ud}</div><div class="flex-1 flex items-center pt-[2px] pl-[8px] bg-linear-to-b from-[#999] to-[#b0b0b0]">${t}</div>${sq(I.plus)}${sq(I.x)}</div>`;
const info = (stat) => `
<div class="relative h-[27px] shrink-0 flex items-center pl-[8px] border-b border-black bg-linear-to-b from-[#747474] to-[#686868] overflow-hidden">
  ${edSel(I.info)}<span class="ml-[12px] flex">${menus([['File', 38], ['Render', 55], ['Window', 60], ['Help', 37]])}</span>
  ${idBlock(I.layout, 'Default')}<span class="w-[7px]"></span>${idBlock(I.scene, 'Scene')}
  <div class="ml-[17px] w-[111px] h-[20px] flex rounded-[4px] border border-[#222] overflow-hidden">${menu('Blender Render')}</div>
  <span class="ml-[18px] mr-[9px]">${I.logo}</span><span class="whitespace-nowrap pt-[3px]">${stat}</span>
  ${hatchB('left-0 bottom-0')}${hatch('right-0 top-0')}
</div>`;

/* ---------- tool shelf ---------- */
const tabs = (list) => `<div class="w-[19px] shrink-0 flex flex-col gap-[5px] pt-[7px] pl-[2px] bg-[#434343]">${list.map(([t, h], i) => `<div class="flex items-center justify-center rounded-l-[5px] border border-r-0 border-[#333] text-[10.500px] ${i ? 'bg-[#555]' : 'bg-[#727272]'}" style="height:${h}px"><span class="[writing-mode:vertical-rl] rotate-180 whitespace-nowrap">${t}</span></div>`).join('')}</div>`;
const vbar = (h, th) => `<div class="w-[12px] shrink-0 rounded-full border border-[#444] bg-[#5c5c5c]" style="height:${h}px"><div class="-m-px w-[12px] rounded-full border border-[#444] bg-linear-to-r from-[#969696] to-[#747474]" style="height:${th}px"></div></div>`;
const shelfObject = `
<div class="flex h-[689px] shrink-0 overflow-hidden">
  ${tabs([['Tools', 36], ['Create', 44], ['Relations', 57], ['Animation', 62], ['Physics', 48], ['Grease Pencil', 79]])}
  <div class="w-[140px] px-[6px] flex flex-col border-r border-[#606060]">
    <div class="pt-px">${title('Transform', true)}</div>
    <div class="pt-[9px] pb-[7px] px-[3px]">${col(3, [btn('Translate'), btn('Rotate'), btn('Scale')])}${sp(6)}${col(1, [btn('Mirror')])}</div>
    ${panel('Edit', true, col(3, [btn('Duplicate'), btn('Duplicate Linked'), btn('Delete')]) + sp(6) + col(1, [btn('Join')]) + sp(5) + col(1, [menu('Set Origin')]) + sp(6) + lab('Shading:') + col(1, [split([btn('Smooth'), btn('Flat')])]) + sp(5) + lab('Data Transfer:') + col(1, [split([btn('Data'), btn('Data Layo')])]) + sp(6))}
    ${panel('History', false)}
  </div>
</div>`;
const shelfEdit = `
<div class="flex h-[689px] shrink-0 overflow-hidden">
  ${tabs([['Tools', 36], ['Create', 44], ['Shading / UVs', 79], ['Options', 49], ['Grease Pencil', 79]])}
  <div class="w-[140px] pl-[6px] flex border-r border-[#606060]">
    <div class="w-[112px] flex flex-col">
      <div class="pt-px">${title('Transform', true)}</div>
      <div class="pt-[9px] pb-[8px] px-[3px]">${col(5, ['Translate', 'Rotate', 'Scale', 'Shrink/Fatten', 'Push/Pull'].map(btn))}</div>
      ${panel('Mesh Tools', true, sp(1) + lab('Deform:') + col(4, [split([btn('Slide Ed'), btn('Vertex')]), btn('Noise'), btn('Smooth Vertex'), btn('Randomize')]) + sp(6) + lab('Add:') + col(13, [menu('Extrude'), btn('Extrude Region'), btn('Extrude Individual'), btn('Inset Faces'), btn('Make Edge/Face'), btn('Subdivide'), btn('Loop Cut and Slide'), btn('Offset Edge Slide'), btn('Duplicate'), split([btn('Spin'), btn('Screw')]), split([btn('Knife'), btn('Select')]), btn('Knife Project'), btn('Bisect')]) + sp(6) + lab('Remove:') + col(3, [menu('Delete'), menu('Merge'), btn('Remove Doubles')]) + sp(7))}
      ${panel('Weight Tools', false)}${panel('History', false)}
    </div>
    <div class="pl-[5px] pt-[5px]">${vbar(679, 671)}</div>
  </div>
</div>`;
const opPanel = (s) => `
<div class="flex h-[216px] shrink-0 overflow-hidden border-t border-[#8d8d8d] border-r border-r-[#606060]">
  <div class="w-[142px] shrink-0">
    <div class="pl-[2px] -mr-[4px]"><div class="w-[134px] ml-px">${title(s.edit ? 'Extrude Region and' : 'Translate', true)}</div></div>
    <div class="pl-[9px] pr-[9px] ${s.edit ? 'w-[143px]' : ''}">
      ${s.edit ? sp(9) + lab('Extrude Region') + sp(5) + lab('Translate') + sp(5) + lab('Vector') : sp(9) + lab('Vector')}
      ${pill(3, [num('X:', s.vec), num('Y:', s.vec), num('Z:', s.vec)])}
      ${sp(6)}${lab('Constraint Axis')}${opt('X', !s.edit)}${opt('Y')}${opt('Z')}${sp(6)}${lab('Orientation')}
    </div>
  </div>
  <div class="pt-[5px]">${vbar(207, s.edit ? 87 : 98)}</div>
</div>`;

/* ---------- viewport drawings; scaled groups keep strokes unscaled ---------- */
const NS = 'vector-effect="non-scaling-stroke"';
const walls = (paths, tf) => `<g transform="${tf}" fill="none" stroke-linejoin="round" shape-rendering="crispEdges"><g stroke="#ffa33f" stroke-width="5">${paths.map(p => `<path d="${p}" ${NS}/>`).join('')}</g><g stroke="#000" stroke-width="3.200">${paths.map(p => `<path d="${p}" ${NS}/>`).join('')}</g></g>`;
const gizmo = (x, y, gx, gy, rx, ry) => `
<path d="M${x} ${y - 14}L${gx} ${gy + 18}" stroke="#00d800"/><path d="M${gx} ${gy}l4.500 19h-9z" fill="#00e000"/>
<path d="M${x + 15} ${y}L${rx - 18} ${ry}" stroke="#e00000"/><path d="M${rx} ${ry}l-18-4.500v9z" fill="#e00000"/>
<circle cx="${x}" cy="${y}" r="14.500" fill="none" stroke="#fff" stroke-width="1.200"/><circle cx="${x}" cy="${y}" r="3" fill="#f7a040" stroke="#000"/>`;
const cursor3d = (x, y) => `<circle cx="${x}" cy="${y}" r="10" fill="none" stroke="#fff" stroke-width="1.300"/><circle cx="${x}" cy="${y}" r="10" fill="none" stroke="#e01010" stroke-width="1.300" stroke-dasharray="4 4"/><path d="M${x - 20} ${y}h15M${x + 5} ${y}h15M${x} ${y - 20}v15M${x} ${y + 5}v15" stroke="#000"/>`;
const miniAxes = `<path d="M250 929V905M250 905h-1v-5" stroke="#00b800" stroke-width="2" fill="none"/><path d="M250 929.500h19l6-1.500" stroke="#c00000" stroke-width="2" fill="none"/><text x="251" y="904" font-size="10" fill="#00b800">y</text><text x="277" y="927" font-size="10" fill="#c00000">x</text><text x="252" y="929" font-size="10" fill="#1010c0">z</text>`;
const miniAxesZ = `<path d="M250 929h25" stroke="#c00000" stroke-width="2"/><path d="M250 929v-20" stroke="#1010e0" stroke-width="2.500"/><path d="M248 926v-9" stroke="#00b800" stroke-width="1.500"/><text x="277" y="927" font-size="10" fill="#c00000">x</text><text x="252" y="906" font-size="10" fill="#1010e0">z</text><text x="251" y="917" font-size="9" fill="#00b800">y</text>`;

function quadMap([x0, y0], [x1, y1], [x2, y2], [x3, y3]) {
  const dx1 = x1 - x2, dx2 = x3 - x2, sx = x0 - x1 + x2 - x3, dy1 = y1 - y2, dy2 = y3 - y2, sy = y0 - y1 + y2 - y3;
  const d = dx1 * dy2 - dx2 * dy1, g = (sx * dy2 - dx2 * sy) / d, h = (dx1 * sy - sx * dy1) / d;
  return (u, v) => { const w = g * u + h * v + 1; return [((x1 - x0 + g * x1) * u + (x3 - x0 + h * x3) * v + x0) / w, ((y1 - y0 + g * y1) * u + (y3 - y0 + h * y3) * v + y0) / w]; };
}
function grid(a, b, c, d, n) {
  const m = quadMap(a, b, c, d), f = (p) => p.map(v => v.toFixed(1)).join(' ');
  let s = '';
  for (let i = 0; i <= n; i++) { const t = i / n; s += `M${f(m(t, 0))}L${f(m(t, 1))}M${f(m(0, t))}L${f(m(1, t))}`; }
  return { path: `<path d="${s}" stroke="#4b4b4b" fill="none"/>`, m, f };
}

const view1 = `
<path d="M904 51L930 956" stroke="#187a18"/><path d="M315 634L700 624.500L1674 601" stroke="#7e1818"/>
${walls([
  'M308 20V105L311 140L308 395L300 400L286 409L276 402L230 398L160 393L78 397L77 490L73 510V560L78 583H306L304 640L303 920L306 1180L301 1200L306 1215L308 1350H384L387 1335L383 1180V930L386 600L384 519L520 520L570 524L770 518L784 508L787 434',
  'M787 513H967V1240L969 1273L1200 1271L1345 1268L1560 1264',
  'M389 20L388 300V400L420 408L608 411L611 349L735 350L742 364L790 361L785 298H822L823 231L906 227L903 177L1050 175L1240 172L1345 167L1355 150L1356 60L1353 20',
  'M1560 44L1470 44L1447 48L1443 90L1447 165L1560 167',
  'M1560 279L1240 281L1064 284L1063 545L1059 580L1061 700L1058 1160L1300 1161L1440 1158H1560'
], 'translate(960 40) scale(.45918 .38265)')}
${gizmo(921.5, 619.5, 920, 535, 1006, 618)}${cursor3d(1499.5, 930.5)}${miniAxes}`;

const g2 = grid([751, 424], [1095, 415], [1101, 756], [763, 763], 16);
const view2 = `
${g2.path}<path d="M922.500 419L931 728" stroke="#187a18"/><path d="M757 594L1098 586.500" stroke="#7e1818"/>
${walls([
  'M1126 10V210L1132 240L1133 300L1131 352L1000 355L875 358V388L829 392V430L809 433L811 469L785 470L780 463L709 464L708 499L584 498L583 300V206L541 205L539 320L536 350L537 490L525 499L510 491L408 490L404 560L407 603H537L536 960L534 976L539 1066H582L580 860L582 566L700 568L800 563L808 555L810 514',
  'M810 560L913 560L914 1018L1120 1017L1343 1012L1348 419L1570 415',
  'M1169 10V213L1190 220L1199 232L1300 233V279L1195 281L1183 284L1182 320L1186 352H1290L1430 349L1570 345',
  'M967 424L1210 421L1290 420L1291 625L1286 635L1291 645L1290 945L1200 950L1040 952L966 951L965 650Z'
], 'translate(740 40) scale(.59949 .47194)')}
${gizmo(928.5, 590.5, 927, 506, 1012, 588.500)}${cursor3d(448.5, 574)}${miniAxes}`;

/* extruded walls: [x1,y1,x2,y2,stripe spacing] along the top edge, far to near */
const SEG = [
  [700, 97, 765, 170, 6], [655, 97, 700, 97, 4], [765, 172, 895, 172, 5], [895, 172, 912, 190, 4], [808, 195, 912, 190, 5], [655, 97, 780, 234, 5], [765, 172, 800, 234, 3],
  [808, 197, 832, 235, 3], [832, 232, 1200, 205, 8], [1200, 205, 1553, 184, 7], [540, 243, 780, 233, 6], [487, 262, 540, 258, 8], [1345, 234, 1553, 218, 7], [1345, 234, 1475, 315, 7],
  [1030, 248, 1305, 235, 6], [1305, 235, 1420, 318, 4], [1420, 318, 1475, 315, 10], [1030, 248, 1422, 607, 13],
  [640, 268, 970, 250, 7], [970, 250, 1090, 365, 5], [1090, 365, 1300, 562, 12], [640, 268, 865, 587, 7], [865, 587, 1135, 575, 15], [1135, 575, 1300, 562, 6],
  [168, 193, 215, 193, 4], [168, 193, 203, 322, 4], [215, 193, 252, 322, 5], [252, 322, 382, 318, 6], [380, 298, 490, 294, 4], [485, 262, 498, 296, 3], [500, 320, 510, 345, 3],
  [57, 328, 200, 322, 6], [57, 328, 62, 390, 3], [62, 390, 220, 384, 7], [262, 358, 420, 350, 7], [420, 350, 635, 340, 10], [635, 340, 835, 648, 12],
  [262, 358, 378, 715, 6], [220, 384, 312, 722, 7], [312, 722, 380, 718, 4], [835, 650, 1422, 607, 18]
];
const drop = (x, y) => [x - (x - 100) * .021, y + 84 + y * .05];
let mesh = '';
for (const [x1, y1, x2, y2, st] of SEG) {
  const b1 = drop(x1, y1), b2 = drop(x2, y2), len = Math.hypot(x2 - x1, (y2 - y1) * .7), n = Math.max(2, Math.round(len / st));
  mesh += `<path d="M${x1} ${y1}L${x2} ${y2}L${b2}L${b1}Z" fill="${st < 5 ? 'url(#dense)' : st < 7 ? 'url(#mid)' : '#000'}"/>`;
  for (let i = 0; i <= n; i++) {
    const t = i / n, x = x1 + (x2 - x1) * t, y = y1 + (y2 - y1) * t, b = drop(x, y), e = .5 + .5 * ((i * 7) % 5) / 5;
    const bx = x + (b[0] - x) * e, by = y + (b[1] - y) * e;
    mesh += `<path d="M${x.toFixed(1)} ${y.toFixed(1)}h2L${(bx + 1.5).toFixed(1)} ${by.toFixed(1)}h-1.500z" fill="url(#stripe)"/>`;
    if (st < 5 && i % 2) mesh += `<path d="M${(x + 2).toFixed(1)} ${(y + 25).toFixed(1)}L${(b[0] + 2).toFixed(1)} ${b[1].toFixed(1)}" stroke="#000" stroke-opacity=".6" stroke-width="1.500"/>`;
  }
  mesh += `<path d="M${x1} ${y1}L${x2} ${y2}" stroke="#ff8c00" stroke-width="2.600" stroke-linecap="square" ${NS}/>`;
}
const g4 = grid([755, 602], [1093, 582], [1238, 879], [655, 911], 16);
const view4 = `
<defs><linearGradient id="stripe" x1="0" y1="0" x2="0" y2="1"><stop offset="0" stop-color="#f09410"/><stop offset=".5" stop-color="#8a5506"/><stop offset="1" stop-color="#1a1000"/></linearGradient>
<linearGradient id="dense" x1="0" y1="0" x2="0" y2="1"><stop offset="0" stop-color="#d88406"/><stop offset=".5" stop-color="#8a5604"/><stop offset="1" stop-color="#000"/></linearGradient>
<linearGradient id="mid" x1="0" y1="0" x2="0" y2="1"><stop offset="0" stop-color="#4a2e02"/><stop offset=".4" stop-color="#1a1000"/><stop offset="1" stop-color="#000"/></linearGradient></defs>
${g4.path}<path d="M${g4.f(g4.m(.5, 0))}L${g4.f(g4.m(.5, 1))}" stroke="#187a18"/><path d="M${g4.f(g4.m(0, .5))}L${g4.f(g4.m(1, .5))}" stroke="#7e1818"/>
<path d="M1627 51L1343 956" stroke="#5c5cc4"/>
<g transform="translate(940 380) scale(.47194 .33333)">${mesh}</g>
<path d="M928 661h7l-1 34h-5z" fill="url(#dense)"/><path d="M928 661h7v6h-7z" fill="#ff8c00"/><circle cx="931.500" cy="703" r="2.500" fill="#f7a040" stroke="#000"/>
${cursor3d(260.5, 855.5)}${miniAxesZ}`;

const viewport = (s) => `
<div class="relative flex-1 min-w-0 overflow-hidden bg-[#393939] text-white">
  <svg width="1449" height="905" viewBox="224 51 1449 905" class="block">${s.view}</svg>
  <span class="absolute left-[20px] top-[13px]">User Persp</span>${s.meters ? '<span class="absolute left-[20px] top-[33px]">Meters</span>' : ''}
  <span class="absolute text-[41px]" style="left:${s.nx}px;top:${s.ny}px">${s.n}</span>
  <span class="absolute left-[70px] bottom-[8px]">(1) Curve</span>
  <span class="absolute right-0 top-[22px] w-[15px] h-[15px] rounded-l-[4px] bg-[#2a2a2a] text-[#999] font-bold text-[12px] flex items-center justify-center">+</span>
  ${hatch('right-0 top-px')}
</div>`;

/* ---------- 3D view header ---------- */
const dsel = (icon, w) => `<div class="h-[20px] shrink-0 flex items-center justify-between px-[3px] rounded-[4px] border border-[#222] bg-linear-to-b from-[#555] to-[#373737]" style="width:${w}px">${icon}${ud}</div>`;
const dk = (icon, on) => `<div class="w-[20px] shrink-0 flex items-center justify-center ${on ? 'bg-[#5680c2]' : 'bg-linear-to-b from-[#373737] to-[#555]'}">${icon}</div>`;
const frame = (w, ml, body) => `<div class="h-[20px] shrink-0 flex rounded-[4px] border border-[#2c2c2c] overflow-hidden divide-x divide-[#2c2c2c]" style="width:${w}px;margin-left:${ml}px">${body}</div>`;
const layersGrid = (first) => `<svg width="50" height="20" viewBox="0 0 50 20" class="ml-[5px] shrink-0"><rect x=".5" y=".5" width="49" height="19" rx="4" fill="#999" stroke="#2c2c2c"/><path d="M10.300 0v20M20.200 0v20M30 0v20M39.800 0v20M0 10h50" stroke="#2c2c2c"/>${first ? '<circle cx="5" cy="5" r="2.300" fill="#f7a040" stroke="#7a3a00" stroke-width=".8"/>' : ''}</svg>`;
const MODES = [
  ['T', 'exture Paint', I.brush('<path d="M1 1h9v9H1z" fill="#eee"/><path d="M1 1h3v3H1zM7 1h3v3H7zM4 4h3v3H4zM1 7h3v3H1z" fill="#b33"/>')],
  ['W', 'eight Paint', I.brush('<path d="M1 8l7-6" stroke="#eee" stroke-width="2.500"/><circle cx="7" cy="2" r="2" fill="#eee"/><circle cx="2" cy="7.500" r="2" fill="#eee"/>')],
  ['V', 'ertex Paint', I.brush('<path d="M2 2h10M2 2l3 9" stroke="#aaa"/><path d="M0 0h3.500v3.500H0z" fill="#fff"/>')],
  ['S', 'culpt Mode', I.chisel], ['E', 'dit Mode', I.edit], ['O', 'bject Mode', I.cube]
];
const popup = `<div class="absolute -left-px bottom-[20px] w-[123px] h-[139px] rounded-t-[5px] bg-[#1a1a1a]/95 shadow-[0_2px_8px_rgba(0,0,0,.6)] flex flex-col pt-[6px]">${MODES.map(([a, b, ic], i) => `<div class="h-[22px] flex items-center"><div class="h-[18px] flex-1 mx-px flex items-center pl-[9px] gap-[3px] ${i === 4 ? 'bg-linear-to-b from-[#6f9ae0] to-[#5a80c4] text-black' : 'text-white'}">${ic}<b class="font-normal pt-[2px] whitespace-nowrap"><u>${a}</u>${b}</b></div></div>`).join('')}</div>`;
const viewHeader = (s) => s.edit ? `
<div class="relative h-[26px] shrink-0 flex items-center pt-[2px] pl-[15px] bg-linear-to-b from-[#777] to-[#6a6a6a] border-t border-[#8d8d8d]">D: 1.829m (1.829m) normal${hatchB('left-0 bottom-0')}</div>` : `
<div class="relative h-[26px] shrink-0 flex items-center pl-[9px] bg-linear-to-b from-[#777] to-[#6a6a6a] border-t border-[#8d8d8d]">
  ${edSel(I.cubeW)}<span class="ml-[12px] flex">${menus([['View', 45], ['Select', 51], ['Add', 39], ['Object', 46]])}</span>
  <div class="relative w-[113px] h-[20px] flex rounded-[4px] border border-[#222] ${s.popup ? '[&_span]:text-[#bbb]' : ''}"><div class="flex flex-1 overflow-hidden rounded-[3px]">${menu('Object Mode', 'pl-[4px]', I.cube)}</div>
  ${s.popup ? popup : ''}</div>
  <span class="ml-[6px] flex">${dsel(I.sphere, 31)}</span>
  ${frame(50, 6, `<div class="flex-1 flex items-center justify-between px-[2px] bg-linear-to-b from-[#555] to-[#373737]">${I.pivot}${ud}</div>` + sq(I.manip))}
  ${frame(152, 6, dk(I.axes) + dk(I.move, true) + dk(I.rot) + dk(I.scale) + menu('Global'))}
  ${layersGrid(true)}${layersGrid(false)}
  ${frame(20, 5, sq(I.lockv))}${frame(20, 5, sq(I.ring))}
  ${frame(71, 5, sq(I.magnet) + `<div class="flex-1 flex items-center justify-between px-[2px] bg-linear-to-b from-[#555] to-[#373737]">${I.snapinc}${ud}</div>` + sq(I.snapgrid))}
  ${frame(40, 6, sq(I.camstar) + sq(I.clap))}
  ${hatchB('left-0 bottom-0')}
</div>`;

/* ---------- timeline ---------- */
let marks = '', ticks = '';
for (let f = -55; f <= 280; f += 5) { const x = 338.700 + f * 4.710; if (x > 66) marks += `<path d="M${x.toFixed(1)} 983V1036" stroke="#000" stroke-opacity="${f % 10 ? .13 : .3}"/>`; }
for (let f = -50; f <= 280; f += 10) ticks += `<text x="${(340.500 + f * 4.680).toFixed(1)}" y="1048" text-anchor="middle">${f}</text>`;
const timeline = `
<div class="relative h-[72px] shrink-0 border-t border-black bg-[#727272]">
<svg width="1608" height="71" viewBox="65 983 1608 71" class="block">
<path d="M65 983h1608v54H65z" fill="#434343"/><path d="M339 983h1177v54H339z" fill="#727272"/>${marks}<path d="M341.500 983h2.600v54h-2.600z" fill="#5fbf3c"/>
<rect x="69.500" y="1037.500" width="1598" height="13" rx="6.500" fill="#8f8f8f" stroke="#444"/><circle cx="75" cy="1044" r="4.500" fill="#6a6a6a" stroke="#444"/><circle cx="1662" cy="1044" r="4.500" fill="#6a6a6a" stroke="#444"/><path d="M65 1036.500h1608" stroke="#858585"/>
<g font-size="10" fill="#0a0a0a">${ticks}</g></svg>${hatch('right-0 top-0')}</div>`;
const timeFooter = `
<div class="relative h-[26px] shrink-0 flex items-center pl-[9px] bg-linear-to-b from-[#747474] to-[#6a6a6a] border-t border-[#8d8d8d]">
  ${edSel(I.clock)}<span class="ml-[12px] flex">${menus([['View', 45], ['Marker', 55], ['Frame', 52], ['Playback', 58]])}</span>
  ${frame(40, 0, sq(I.clockO) + sq(I.lock))}
  <div class="ml-[6px] w-[227px] h-[20px] flex rounded-full border border-[#2c2c2c] overflow-hidden divide-x divide-[#2c2c2c]">${num('Start:', '1')}${num('End:', '250')}</div>
  <div class="ml-[7px] w-[88px] h-[20px] flex rounded-full border border-[#2c2c2c] overflow-hidden">${num('', '1')}</div>
  ${frame(120, 17, PL.map(btnC).join(''))}
  ${frame(114, 6, menu('No Sync'))}
  ${frame(20, 16, sq(I.rec))}
  ${frame(31, 6, `<div class="flex-1 flex items-center justify-between px-[2px] bg-linear-to-b from-[#555] to-[#373737]">${I.keyset}${ud}</div>`)}
  ${frame(166, 6, `<div class="flex-1 bg-linear-to-b from-[#999] to-[#b0b0b0] flex items-center pl-1">${I.key}</div>` + sq(I.key) + sq(I.keyx))}
  ${hatchB('left-0 bottom-0')}
</div>`;

/* ---------- outliner ---------- */
const pm = (m) => `<svg width="10" height="10" viewBox="0 0 10 10" class="shrink-0"><circle cx="5" cy="5" r="4.200" fill="#ddd" stroke="#222"/><path d="M2.500 5h5${m ? '' : 'M5 2.500v5'}" stroke="#111" stroke-width="1.300"/></svg>`;
const halo = (ic, c) => `<span class="size-[18px] rounded-full flex items-center justify-center shrink-0 ${c}">${ic}</span>`;
const olRow = (i, exp, icon, t, extra, vis, white) => `
<div class="h-[20px] shrink-0 flex items-center ${i % 2 ? '' : 'bg-[#6c6c6c]'}">
  <span class="w-[40px] pl-[25px] shrink-0 flex">${exp ? pm() : ''}</span>${halo(icon[0], icon[1])}<span class="ml-[4px] pt-[2px] ${white ? 'text-white' : ''}">${t}</span>
  ${extra ? `<span class="ml-[10px] w-px h-[11px] bg-[#333]"></span><span class="ml-[9px]">${halo(extra[0], extra[1])}</span>` : ''}
  ${vis ? `<span class="ml-auto w-[58px] shrink-0 flex gap-[4px]">${I.eye}<span class="ml-px">${I.cursor}</span>${I.cam}</span>` : ''}
</div>`;
const outliner = (s) => `
<div class="relative h-[179px] shrink-0 flex flex-col overflow-hidden">
  <div class="h-[27px] shrink-0 flex items-center pl-[9px] border-b border-[#5c5c5c]">${edSel(I.tree)}<span class="ml-[12px] flex">${menus([['View', 45], ['Search', 47]])}</span><div class="flex-1 h-[20px] -mr-2 flex items-center pt-[2px] pl-[7px] rounded-[4px] border border-[#222] bg-linear-to-b from-[#555] to-[#373737] text-white">All Scenes</div></div>
  <div class="relative flex flex-col pt-px">
    <div class="h-[20px] flex items-center pl-[6px] w-[186px] bg-[#7c8288]">${pm(true)}<span class="ml-[6px]">${halo(I.scene, 'bg-[#a9adb2]')}</span><span class="ml-[3px] pt-[2px]">Scene</span></div>
    ${olRow(1, 1, [I.layers, ''], 'RenderLayers', [I.layers, 'bg-[#9a9a9a]'])}
    ${olRow(2, 0, [I.world, 'bg-[#9a9aa8]'], 'World')}
    ${olRow(3, 1, [I.film, ''], 'Camera', [I.film, 'bg-[#999] grayscale opacity-60'], 1)}
    ${olRow(4, 1, [I.tri, 'bg-[#b08050]'], 'Curve', [I.triG, s.edit ? 'bg-[#b5b5b5]' : ''], 1, 1)}
    ${olRow(5, 1, [I.bulb, ''], 'Lamp', [I.lampd, ''], 1)}
    <div class="h-[13px] bg-[#6c6c6c]"></div>
    <svg width="246" height="133" viewBox="0 0 246 133" class="absolute left-0 top-0"><path d="M186.500 0v133M206.500 0v133M226.500 0v133" stroke="#5a5a5a"/><path d="M30.500 20v6M30.500 36v30M30.500 76v10M30.500 96v10M36 71h6M36 91h6M36 111h6" stroke="#444"/></svg>
  </div>
  <div class="ml-[5px] w-[236px] h-[14px] rounded-full border border-[#505050] bg-[#5c5c5c]"><div class="-m-px w-[193px] h-[14px] rounded-full border border-[#444] bg-linear-to-b from-[#969696] to-[#7a7a7a]"></div></div>
  ${hatch('right-0 top-0')}${hatchB('left-0 bottom-0')}
</div>`;

/* ---------- properties ---------- */
const tabIcons = [I.cam, I.layers, I.scene, I.world, I.cube, I.chain, I.wrench, I.triG, I.mat, I.tex];
const propHeader = (active, hl) => `
<div class="relative h-[26px] shrink-0 flex items-center pl-[9px] border-b border-[#5c5c5c]">${edSel(I.props)}
  <div class="ml-[7px] flex h-[20px] flex-1 rounded-l-[4px] border border-[#222] overflow-hidden">${tabIcons.map((ic, i) => `<div class="w-[19.800px] shrink-0 flex items-center justify-center border-r border-[#222] ${i === active ? 'bg-[#5680c2]' : 'bg-linear-to-b from-[#4a4a4a] to-[#555]'}"><span class="${i === active ? '' : 'opacity-60'}">${ic}</span></div>`).join('')}</div>
  ${hatch('right-0 top-0')}
  ${hl ? '<span class="absolute left-[86px] -top-[5px] w-[22px] h-[36px] rounded-[50%] bg-[#e0dc00]/50"></span>' : ''}
</div>`;
const crumb = `<div class="h-[35px] shrink-0 flex items-center pl-[9px] pt-[5px] gap-[4px]">${I.pin}${I.scene}<span class="pl-[2px] pt-[2px]">Scene</span></div>`;
const two = (a, b) => `<div class="flex gap-[8px]"><div class="w-[111px]">${a}</div><div class="w-[110px]">${b}</div></div>`;
const labRow = (t, w, body, hl = '') => `<div class="flex relative"><div class="shrink-0" style="width:${w}px">${lab(t)}</div><div class="flex-1">${body}</div>${hl}</div>`;
const field = (icon, t, end = '') => `<div class="flex-1 flex items-center justify-between px-[4px] bg-linear-to-b from-[#999] to-[#b0b0b0]"><span class="flex items-center gap-[5px]">${icon}<span class="pt-[2px]">${t}</span></span>${end}</div>`;
const renderProps = `<div class="px-[5px] flex flex-col">
${panel('Render', true, col(1, [split([btnI(I.camstar, 'Render'), btnI(I.clap, 'Animation'), btnI(I.spk, 'Audio')])]) + sp(5) + labRow('Display:', 81, col(1, [split([menu('Image Editor'), sq(I.unlock)])])) + sp(7))}
${panel('Dimensions', true, col(1, [split([menu('Render Presets'), sq(I.plus), sq(I.minus)])]) + sp(6) + two(
  lab('Resolution:') + pill(3, [num('X:', '1920 px'), num('Y:', '1080 px'), `<div class="flex-1 flex items-center justify-end pt-[2px] pr-[15px] bg-[linear-gradient(90deg,#858585_53%,#b0b0b0_53%)]">50%</div>`]) + sp(1) + lab('Aspect Ratio:') + pill(2, [num('X:', '1.000'), num('Y:', '1.000')]) + sp(3) + `<div class="flex"><div class="w-[59px]">${opt('Bord')}</div><div>${opt('Crop', false, true)}</div></div>`,
  lab('Frame Range:') + pill(3, [num('Start Frame:', '1'), num('End Frame:', '250'), num('Frame Step:', '1')]) + sp(1) + lab('Frame Rate:') + col(1, [menu('24 fps')]) + lab('Time Remapping:') + pill(1, [split([num('', '100'), num('', ':100')])])
) + sp(6))}
${panel('Anti-Aliasing', true, two(col(1, [split([radio('5'), radio('8', 1), radio('11'), radio('16')])]) + sp(2) + opt('Full Sample'), col(1, [menu('Mitchell-Netravali')]) + sp(2) + pill(1, [num('Size:', '1.000 px')])) + sp(7), true)}
${panel('Sampled Motion Blur', false, '', false)}${panel('Shading', false)}${panel('Performance', false)}${panel('Post Processing', false)}${panel('Metadata', false)}
${panel('Output', true, col(1, [split([field('', '/tmp/'), sq(I.folder)])]) + sp(6) + two(opt('Overwrite', 1) + sp(2) + opt('Placeholders'), opt('File Extensions', 1) + sp(2) + opt('Cache Result')) + sp(4) + two(col(1, [menu('PNG', 'pl-[3px]', I.png)]), col(1, [split([radio('BW'), radio('RGB'), radio('RGBA', 1)])])) + sp(2) + labRow('Color Depth:', 82, col(1, [split([radio('8', 1), radio('16')])])) + sp(2) + pill(1, [`<div class="flex-1 flex items-center justify-between pt-[2px] pl-[13px] pr-[15px] bg-[linear-gradient(90deg,#858585_18%,#b0b0b0_18%)]"><span>Compression:</span><span>15%</span></div>`]) + sp(9))}
${panel('Bake', false)}${panel('Freestyle', false, '', false)}
</div>`;
const slider = (l, v) => `<div class="flex-1 flex items-center justify-between pt-[2px] px-[13px] whitespace-nowrap bg-[#999]"><span>${l}</span><span>${v}</span></div>`;
const mark2 = (cls) => `<span class="absolute ${cls} bg-[#e0dc00]/50"></span>`;
const sceneProps = (hl) => `<div class="px-[5px] flex flex-col">
${panel('Scene', true, labRow('Camera:', 81, col(1, [field(I.cube, 'Camera', svg('<path d="M4 2l4 4 4-4 2 2-4 4 4 4-2 2-4-4-4 4-2-2 4-4-4-4z" fill="#eee" stroke="#222"/>', 11))])) + sp(5) + labRow('Background:', 81, col(1, [field(I.scene, '')])) + sp(5) + labRow('Active Clip:', 81, col(1, [field(I.clip, '')])) + sp(7))}
${panel('Units', true, `<div class="relative">${col(1, [split([menu('Meters'), sq(I.plus), sq(I.minus)])])}${hl ? mark2('left-0 top-0 w-[224px] h-[20px]') : ''}</div>` + sp(16) + labRow('Length:', 85, col(1, [menu('Metric')]), hl ? mark2('left-[83px] -top-[6px] w-[152px] h-[32px]') : '') + sp(5) + labRow('Angle:', 85, col(1, [menu('Degrees')])) + sp(5) + labRow('Unit Scale:', 85, pill(1, [num('', '176.393997')]), hl ? mark2('left-0 top-[2px] w-[234px] h-[19px]') : '') + sp(2) + `<div class="pl-[85px]">${opt('Separate Units')}</div>` + sp(7))}
${panel('Keying Sets', true, `<div class="flex gap-[8px]"><div class="w-[202px] h-[40px] rounded-[4px] border border-[#333] bg-[#808080] flex items-end pl-[9px] pb-[5px]"><span class="opacity-70">${pm()}</span><span class="ml-[83px] mb-[2px] w-[14px] h-[4px] border-y border-[#222]"></span></div><div class="w-[20px] h-[40px] flex flex-col rounded-[4px] border border-[#333] overflow-hidden divide-y divide-[#333]"><div class="flex-1 flex items-center justify-center bg-linear-to-b from-[#a8a8a8] to-[#8a8a8a]">${I.plus}</div><div class="flex-1 flex items-center justify-center bg-[#858585]"><span class="opacity-30">${I.minus}</span></div></div></div>` + sp(7))}
${panel('Color Management', false)}${panel('Audio', false)}
${panel('Gravity', true, pill(1, [split([num('X:', '0m/s²'), num('Y:', '0m/s²'), num('', ':-9.8m/s²')])]) + sp(7), true)}
${panel('Rigid Body World', true, col(1, [btnC('<span class="pt-[2px]">Add Rigid Body World</span>')]) + sp(7))}
${panel('Simplify', true, sp(1) + two(lab('Viewport:', 1) + pill(1, [num('Subdivision:', '6', .6)], 1) + sp(2) + pill(1, [slider('Child Par:', '1.000')], 1), lab('Render:', 1) + pill(1, [num('Subdivision:', '6', .6)], 1) + sp(2) + pill(1, [slider('Child Par:', '1.000')], 1) + sp(2) + pill(1, [num('Shadow Sa:', '16', .6)], 1) + sp(2) + pill(1, [slider('AO and S:', '1.000')], 1) + sp(3) + opt('Skip Quad to T…', false, true)) + sp(7), false)}
${panel('Custom Properties', false)}
</div>`;

/* ---------- screens ---------- */
const screen = (s) => `
<section class="flex flex-col w-[1920px] h-[1080px] overflow-hidden bg-[#727272]">
  ${topbar(s.time)}
  <div class="flex flex-1 min-h-0">
    ${launcher(s)}
    <div class="flex-1 min-w-0 flex flex-col">
      ${info(s.stat)}
      <div class="flex flex-1 min-h-0">
        <div class="w-[1608px] shrink-0 flex flex-col">
          <div class="h-[905px] shrink-0 flex"><div class="w-[159px] shrink-0 flex flex-col bg-[#727272]">${s.edit ? shelfEdit : shelfObject}${opPanel(s)}</div>${viewport(s)}</div>
          ${viewHeader(s)}${timeline}${timeFooter}
        </div>
        <div class="flex-1 min-w-0 flex flex-col border-l border-black bg-[#727272]">
          ${outliner(s)}
          <div class="relative flex-1 border-t border-black flex flex-col overflow-hidden">${propHeader(s.tab, s.hl)}${crumb}${s.tab ? sceneProps(s.hl) : renderProps}${hatchB('left-0 bottom-0')}</div>
        </div>
      </div>
    </div>
  </div>
</section>`;
const st = (m) => `v2.79 | Verts:5,397 | Faces:5,389 | Tris:5,389 | Objects:1/3 | Lamps:0/1 | Mem:${m} | Curve`;
document.getElementById('app').innerHTML = [
  { time: '14:24', term: 2, viewer: true, tab: 0, vec: '0.000', stat: st('12.84M'), view: view1, n: '9', nx: 7, ny: 18 },
  { time: '14:27', term: 1, tab: 2, hl: true, vec: '0m', stat: st('13.15M'), view: view2, n: '10', nx: 23, ny: 13, meters: true },
  { time: '14:28', term: 1, tab: 2, vec: '0m', stat: st('13.15M'), view: view2, n: '11', nx: 12, ny: 7, meters: true, popup: true },
  { time: '14:29', term: 1, tab: 2, vec: '0m', edit: true, stat: 'v2.79 | Verts:5,397/16,191 | Edges:10,782/37,755 | Faces:5,389/21,572 | Tris:32,366 | Mem:28.83M | Curve', view: view4, n: '12', nx: 12, ny: 13, meters: true }
].map(screen).join('');
</script>
</body>
</html>
